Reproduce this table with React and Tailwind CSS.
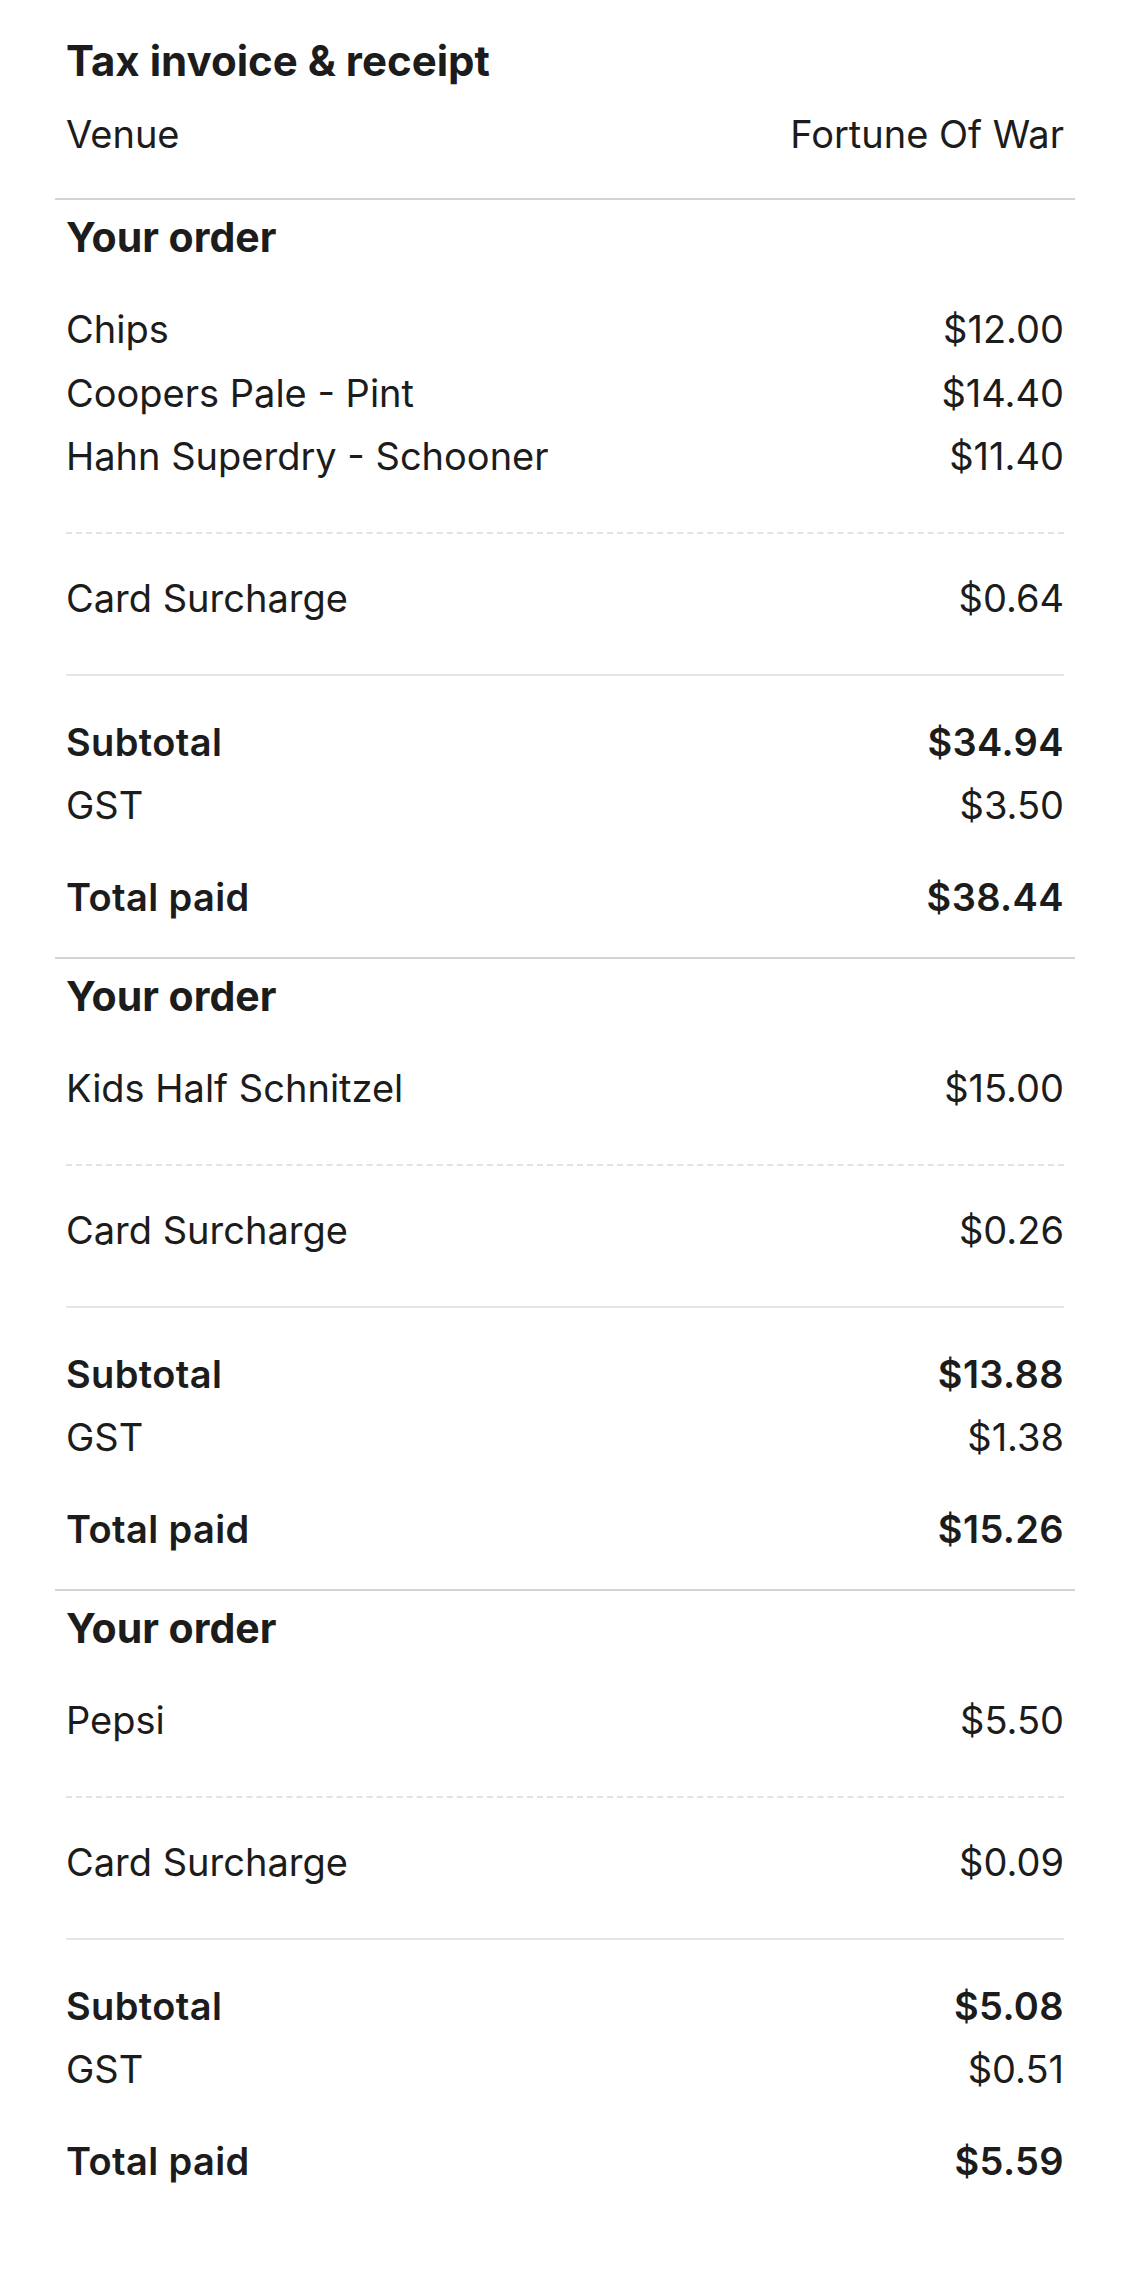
import React from "react";

const orders = [
  {
    items: [
      { name: "Chips", price: "$12.00" },
      { name: "Coopers Pale - Pint", price: "$14.40" },
      { name: "Hahn Superdry - Schooner", price: "$11.40" },
    ],
    surcharge: "$0.64",
    subtotal: "$34.94",
    gst: "$3.50",
    total: "$38.44",
  },
  {
    items: [{ name: "Kids Half Schnitzel", price: "$15.00" }],
    surcharge: "$0.26",
    subtotal: "$13.88",
    gst: "$1.38",
    total: "$15.26",
  },
  {
    items: [{ name: "Pepsi", price: "$5.50" }],
    surcharge: "$0.09",
    subtotal: "$5.08",
    gst: "$0.51",
    total: "$5.59",
  },
];

const Row = ({ label, value, bold, className = "" }) => (
  <div
    className={`flex justify-between items-center text-[38px] leading-[63.5px] ${
      bold ? "font-semibold tracking-[0.01em]" : "font-normal"
    } ${className}`}
  >
    <span>{label}</span>
    <span>{value}</span>
  </div>
);

const OrderSection = ({ order }) => (
  <div className="border-t-2 border-[#d4d4d4] px-[11px] pb-[27.5px]">
    <h2 className="pt-[13px] text-[41px] leading-[48px] font-bold">
      Your order
    </h2>
    <div className="mt-[37px]">
      {order.items.map((item) => (
        <Row key={item.name} label={item.name} value={item.price} />
      ))}
    </div>
    <div className="mt-[43px] border-t-2 border-dashed border-[#e3e3e3]"></div>
    <Row label="Card Surcharge" value={order.surcharge} className="mt-[33.5px]" />
    <div className="mt-[43px] border-t-2 border-[#e6e6e6]"></div>
    <Row label="Subtotal" value={order.subtotal} bold className="mt-[35px]" />
    <Row label="GST" value={order.gst} />
    <Row label="Total paid" value={order.total} bold className="mt-[28.5px]" />
  </div>
);

export default function App() {
  return (
    <div
      className="min-h-[2284px] bg-white px-[55px] pt-[36px] text-[#1c1c1c]"
      style={{ fontFamily: "Inter, 'Noto Sans', sans-serif" }}
    >
      <div className="px-[11px] pb-[32px]">
        <h1 className="text-[42px] leading-[50px] font-bold">
          Tax invoice &amp; receipt
        </h1>
        <Row label="Venue" value="Fortune Of War" className="mt-[16.5px]" />
      </div>
      {orders.map((order, i) => (
        <OrderSection key={i} order={order} />
      ))}
    </div>
  );
}
